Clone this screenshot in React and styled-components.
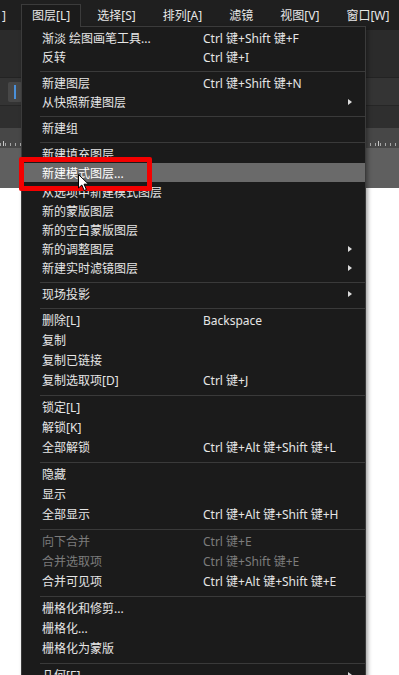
import React from "react";
import styled, { createGlobalStyle } from "styled-components";

const GlobalStyle = createGlobalStyle`
  html, body {
    margin: 0;
    padding: 0;
    background: #ffffff;
  }
  * {
    box-sizing: border-box;
  }
`;

const FONT = `"Noto Sans", "Noto Sans CJK SC", sans-serif`;

const titles = [
  { label: "图层[L]", active: true },
  { label: "选择[S]" },
  { label: "排列[A]" },
  { label: "滤镜" },
  { label: "视图[V]" },
  { label: "窗口[W]" },
];

const groups = [
  {
    h: 19,
    items: [
      { label: "渐淡 绘图画笔工具...", keys: "Ctrl 键+Shift 键+F" },
      { label: "反转", keys: "Ctrl 键+I" },
    ],
  },
  {
    h: 19,
    items: [
      { label: "新建图层", keys: "Ctrl 键+Shift 键+N" },
      { label: "从快照新建图层", sub: true },
    ],
  },
  { h: 19, items: [{ label: "新建组" }] },
  {
    h: 19,
    items: [
      { label: "新建填充图层" },
      { label: "新建模式图层...", active: true },
      { label: "从选项中新建模式图层" },
      { label: "新的蒙版图层" },
      { label: "新的空白蒙版图层" },
      { label: "新的调整图层", sub: true },
      { label: "新建实时滤镜图层", sub: true },
    ],
  },
  { h: 19, items: [{ label: "现场投影", sub: true }] },
  {
    h: 20,
    items: [
      { label: "删除[L]", keys: "Backspace" },
      { label: "复制" },
      { label: "复制已链接" },
      { label: "复制选取项[D]", keys: "Ctrl 键+J" },
    ],
  },
  {
    h: 20,
    items: [
      { label: "锁定[L]" },
      { label: "解锁[K]" },
      { label: "全部解锁", keys: "Ctrl 键+Alt 键+Shift 键+L" },
    ],
  },
  {
    h: 20,
    items: [
      { label: "隐藏" },
      { label: "显示" },
      { label: "全部显示", keys: "Ctrl 键+Alt 键+Shift 键+H" },
    ],
  },
  {
    h: 20,
    items: [
      { label: "向下合并", keys: "Ctrl 键+E", disabled: true },
      { label: "合并选取项", keys: "Ctrl 键+Shift 键+E", disabled: true },
      { label: "合并可见项", keys: "Ctrl 键+Alt 键+Shift 键+E" },
    ],
  },
  {
    h: 20,
    items: [
      { label: "栅格化和修剪..." },
      { label: "栅格化..." },
      { label: "栅格化为蒙版" },
    ],
  },
  { h: 20, items: [{ label: "几何[E]", sub: true }] },
];

const App = () => {
  return (
    <>
      <GlobalStyle />
      <Screen>
        <MenuBar>
          <Cut>]</Cut>
          {titles.map((t) => (
            <Title key={t.label} $active={t.active}>
              {t.label}
            </Title>
          ))}
        </MenuBar>
        <OptionsBar />
        <ToolBar>
          <ToolButton>
            <span />
          </ToolButton>
        </ToolBar>
        <Strip />
        <Ruler>
          <Ticks />
        </Ruler>
        <Frame />
        <Canvas />

        <Dropdown>
          {groups.map((g, gi) => (
            <React.Fragment key={gi}>
              {gi > 0 && <Separator />}
              {g.items.map((it) => (
                <Row
                  key={it.label}
                  $h={g.h}
                  $active={it.active}
                  $disabled={it.disabled}
                >
                  <Label>{it.label}</Label>
                  {it.keys && <Keys>{it.keys}</Keys>}
                  {it.sub && <Arrow />}
                </Row>
              ))}
            </React.Fragment>
          ))}
        </Dropdown>

        <Callout />
        <Cursor viewBox="0 0 12 18" width="12" height="18">
          <path
            d="M0.5 0.5 L0.5 14 L3.8 11 L6.2 16.5 L8.4 15.5 L6 10.2 L10.5 10.2 Z"
            fill="#ffffff"
            stroke="#000000"
            strokeWidth="1"
            strokeLinejoin="round"
          />
        </Cursor>
      </Screen>
    </>
  );
};

const Screen = styled.div`
  position: relative;
  width: 399px;
  height: 675px;
  overflow: hidden;
  display: flex;
  flex-direction: column;
  font-family: ${FONT};
`;

const MenuBar = styled.div`
  display: flex;
  align-items: flex-start;
  height: 30px;
  padding-top: 4px;
  background: #1f1f1f;
  flex-shrink: 0;
  overflow: hidden;
`;

const Cut = styled.div`
  flex: 0 0 16px;
  height: 23px;
  margin-right: 5px;
  padding-left: 2px;
  font-size: 12px;
  line-height: 23px;
  color: #e6e6e6;
`;

const Title = styled.div`
  position: relative;
  z-index: ${(p) => (p.$active ? 3 : 0)};
  flex-shrink: 0;
  height: 23px;
  padding: 0 10px 0 10px;
  margin-right: 5px;
  font-size: 12px;
  line-height: 22px;
  color: #e8e8e8;
  white-space: nowrap;
  background: ${(p) => (p.$active ? "#1b1b1b" : "transparent")};
  border: 1px solid ${(p) => (p.$active ? "#3b3b3b" : "transparent")};
  border-bottom: none;
`;

const OptionsBar = styled.div`
  height: 48px;
  background: #2b2b2b;
  border-bottom: 1px solid #232323;
  flex-shrink: 0;
`;

const ToolBar = styled.div`
  height: 28px;
  display: flex;
  align-items: center;
  padding-left: 8px;
  background: #343434;
  border-bottom: 1px solid #262626;
  flex-shrink: 0;
`;

const ToolButton = styled.div`
  width: 14px;
  height: 20px;
  background: #474747;
  border-radius: 2px;
  display: flex;
  align-items: center;
  justify-content: center;

  span {
    width: 2px;
    height: 14px;
    background: #4a90d9;
  }
`;

const Strip = styled.div`
  height: 22px;
  background: #2f2f2f;
  flex-shrink: 0;
`;

const Ruler = styled.div`
  height: 20px;
  background: #474747;
  display: flex;
  align-items: flex-end;
  padding-bottom: 2px;
  flex-shrink: 0;
`;

const Ticks = styled.div`
  width: 100%;
  height: 5px;
  background-image:
    repeating-linear-gradient(
      to right,
      #c8c8c8 0 1px,
      transparent 1px 25px
    ),
    repeating-linear-gradient(
      to right,
      #a8a8a8 0 1px,
      transparent 1px 5px
    );
  background-size: 100% 5px, 100% 3px;
  background-position: 3px 0, 0 2px;
  background-repeat: repeat-x;
`;

const Frame = styled.div`
  height: 40px;
  background: #5f5f5f;
  flex-shrink: 0;
`;

const Canvas = styled.div`
  flex: 1;
  background: #ffffff;
`;

const Dropdown = styled.div`
  position: absolute;
  z-index: 2;
  left: 21px;
  top: 26px;
  width: 345px;
  bottom: -40px;
  padding-top: 1px;
  background: #1b1b1b;
  border: 1px solid #3b3b3b;
  box-shadow: 2px 2px 4px rgba(0, 0, 0, 0.35);
  font-family: ${FONT};
  font-size: 12px;
`;

const Row = styled.div`
  display: flex;
  align-items: center;
  height: ${(p) => p.$h}px;
  padding-left: 20px;
  background: ${(p) => (p.$active ? "#6a6a6a" : "transparent")};
  color: ${(p) =>
    p.$disabled ? "#7c7c7c" : p.$active ? "#ffffff" : "#e6e6e6"};
  white-space: nowrap;
`;

const Label = styled.span`
  flex: 0 0 161px;
`;

const Keys = styled.span`
  flex: 1;
`;

const Arrow = styled.span`
  margin-left: auto;
  margin-right: 13px;
  width: 0;
  height: 0;
  border-top: 3.5px solid transparent;
  border-bottom: 3.5px solid transparent;
  border-left: 4px solid #dcdcdc;
`;

const Separator = styled.div`
  height: 1px;
  margin: 5px 0 1px 18px;
  background: #3a3a3a;
`;

const Callout = styled.div`
  position: absolute;
  z-index: 4;
  left: 19px;
  top: 157px;
  width: 133px;
  height: 34px;
  border: 5px solid #f40000;
  border-radius: 2px;
`;

const Cursor = styled.svg`
  position: absolute;
  z-index: 5;
  left: 78px;
  top: 174px;
`;

export default App;
